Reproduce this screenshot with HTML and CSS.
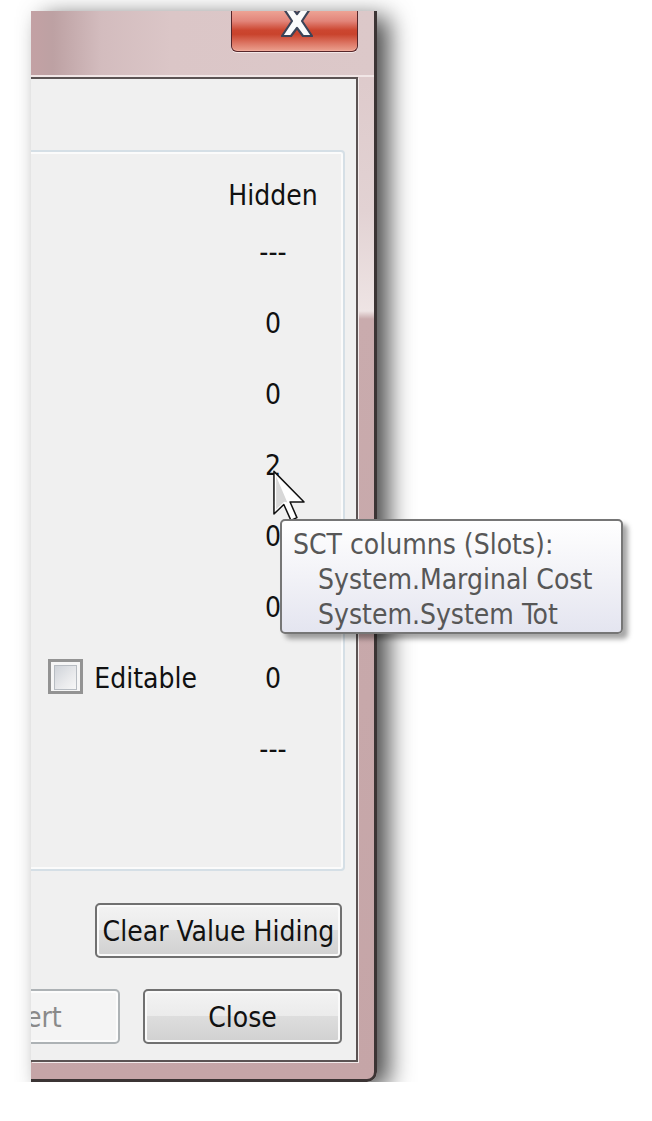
FILE: index.html
```html
<!DOCTYPE html>
<html lang="en">
<head>
	<meta charset="UTF-8">
	<title>Column Hiding</title>
	<link rel="stylesheet" href="styles.css">
</head>
<body>
	<div class="window">
		<div class="titlebar">
			<button class="close-btn" title="Close">
				<svg width="32" height="32" viewBox="0 0 32 32"><path d="M1 1h9l6 8 6-8h9l-10 15 10 15h-9l-6-8-6 8H1l10-15z" fill="#fbfbfb" stroke="#3c4458" stroke-width="2.2" stroke-linejoin="round"/></svg>
			</button>
		</div>
		<div class="client">
			<div class="group">
				<div class="grid">
					<div></div><div class="val head">Hidden</div>
					<div></div><div class="val">---</div>
					<div></div><div class="val">0</div>
					<div></div><div class="val">0</div>
					<div></div><div class="val">2</div>
					<div></div><div class="val">0</div>
					<div></div><div class="val">0</div>
					<label class="check"><span class="box"></span>Editable</label><div class="val">0</div>
					<div></div><div class="val">---</div>
				</div>
			</div>
			<div class="actions">
				<button class="btn wide">Clear Value Hiding</button>
			</div>
			<div class="actions last">
				<button class="btn" disabled>Revert</button>
				<button class="btn">Close</button>
			</div>
		</div>
	</div>

	<svg class="cursor" width="34" height="52" viewBox="0 0 12 19"><path d="M.5.5v15.6l3.6-3.5 2.6 5.8 2.2-1-2.5-5.7h5.1z" fill="#fff" stroke="#111" stroke-width=".55" stroke-linejoin="round"/><path d="M1.3 2.3v12l2.9-2.7 1.2.3-4.1-9.6z" fill="#d8d8d8"/></svg>

	<div class="tooltip">
		<div>SCT columns (Slots):</div>
		<div class="ind">System.Marginal Cost</div>
		<div class="ind">System.System Tot</div>
	</div>
</body>
</html>
```

FILE: styles.css
```css
*{
	margin:0;padding:0;
	box-sizing:border-box;
}
body{
	background:#fff;
	padding:11px 0 0 31px;
	font-family:"DejaVu Sans Condensed","DejaVu Sans",sans-serif;
	font-stretch:condensed;
	font-size:28px;
	color:#111;
}
.window{
	width:346px;
	overflow:hidden;
	background:linear-gradient(180deg,#dcc7c8 0,#e2d2d3 200px,#eee4e4 300px,#c9abad 308px,#c5a5a7 100%);
	border-right:3px solid #3b3434;
	border-bottom:3px solid #3b3434;
	border-bottom-right-radius:10px;
	box-shadow:12px 6px 24px rgba(0,0,0,.7);
}
.titlebar{
	height:66px;
	display:flex;
	justify-content:flex-end;
	padding-right:16px;
	background:linear-gradient(90deg,#c3a1a4 0,#bda1a3 22px,#d3bcbe 70px,#dbc6c7 140px,#dcc8c9 100%);
	border-bottom:2px solid #f1e6e6;
}
.close-btn{
	width:127px;
	height:41px;
	border:1px solid #56262a;
	border-top:none;
	border-radius:0 0 6px 6px;
	background:linear-gradient(180deg,#eda395 0,#e2857a 25%,#cc4630 48%,#c9432c 58%,#dc7462 80%,#eba08f 100%);
	box-shadow:0 1px 0 #f3e7e7,inset 0 -1px 0 #f0a898;
	display:flex;
	justify-content:center;
	align-items:flex-end;
	overflow:hidden;
	padding-bottom:14px;
	padding-left:4px;
}
.close-btn svg{flex:none;}
.client{
	margin:0 16px 17px 0;
	background:#f0f0f0;
	border-top:2px solid #5b5353;
	border-right:2px solid #5b5353;
	border-bottom:2px solid #5b5353;
	box-shadow:1px 1px 0 #f3ebeb;
	padding-bottom:16px;
}
.group{
	margin:71px 11px 0 -20px;
	border:2px solid #d5dfe6;
	border-radius:4px;
	box-shadow:inset 0 0 0 2px #fbfbfb;
	padding:22px 25px 84px 0;
}
.grid{
	display:grid;
	grid-template-columns:1fr 90px;
	column-gap:31px;
	line-height:71px;
}
.val{text-align:center;}
.val.head{line-height:43px;}
.check{
	display:flex;
	justify-content:flex-end;
	align-items:center;
	gap:11px;
}
.box{
	width:35px;
	height:35px;
	border:3px solid #939393;
	padding:3px;
	background:#f6f6f6;
	margin-top:-4px;
}
.box::before{
	content:"";
	display:block;
	height:100%;
	border:1px solid #b7bcc2;
	background:linear-gradient(135deg,#cfd3d9 0,#e9eaec 60%,#f7f7f7 100%);
}
.actions{
	display:flex;
	justify-content:flex-end;
	gap:23px;
	margin:32px 14px 0 0;
}
.actions.last{margin-top:31px;}
.btn{
	flex:none;
	width:199px;
	height:55px;
	font:inherit;
	color:#111;
	border:2px solid #707070;
	border-radius:5px;
	background:linear-gradient(180deg,#f3f3f3 0,#ebebeb 48%,#dddddd 50%,#d1d1d1 100%);
	box-shadow:inset 0 0 0 2px #fafafa;
	padding-top:2px;
}
.btn.wide{width:247px;}
.btn:disabled{
	color:#8a8a8a;
	border-color:#adb2b5;
	background:#f4f4f4;
	box-shadow:inset 0 0 0 2px #fcfcfc;
}
.cursor{
	position:absolute;
	left:272px;
	top:470px;
}
.tooltip{
	position:absolute;
	left:280px;
	top:519px;
	width:343px;
	height:115px;
	border:2px solid #767676;
	border-radius:5px;
	background:linear-gradient(180deg,#ffffff 0,#f2f2f7 50%,#e4e5f0 100%);
	box-shadow:5px 5px 5px rgba(0,0,0,.35);
	color:#575757;
	line-height:35px;
	padding:6px 0 0 11px;
	white-space:nowrap;
}
.tooltip .ind{padding-left:25px;}
```
